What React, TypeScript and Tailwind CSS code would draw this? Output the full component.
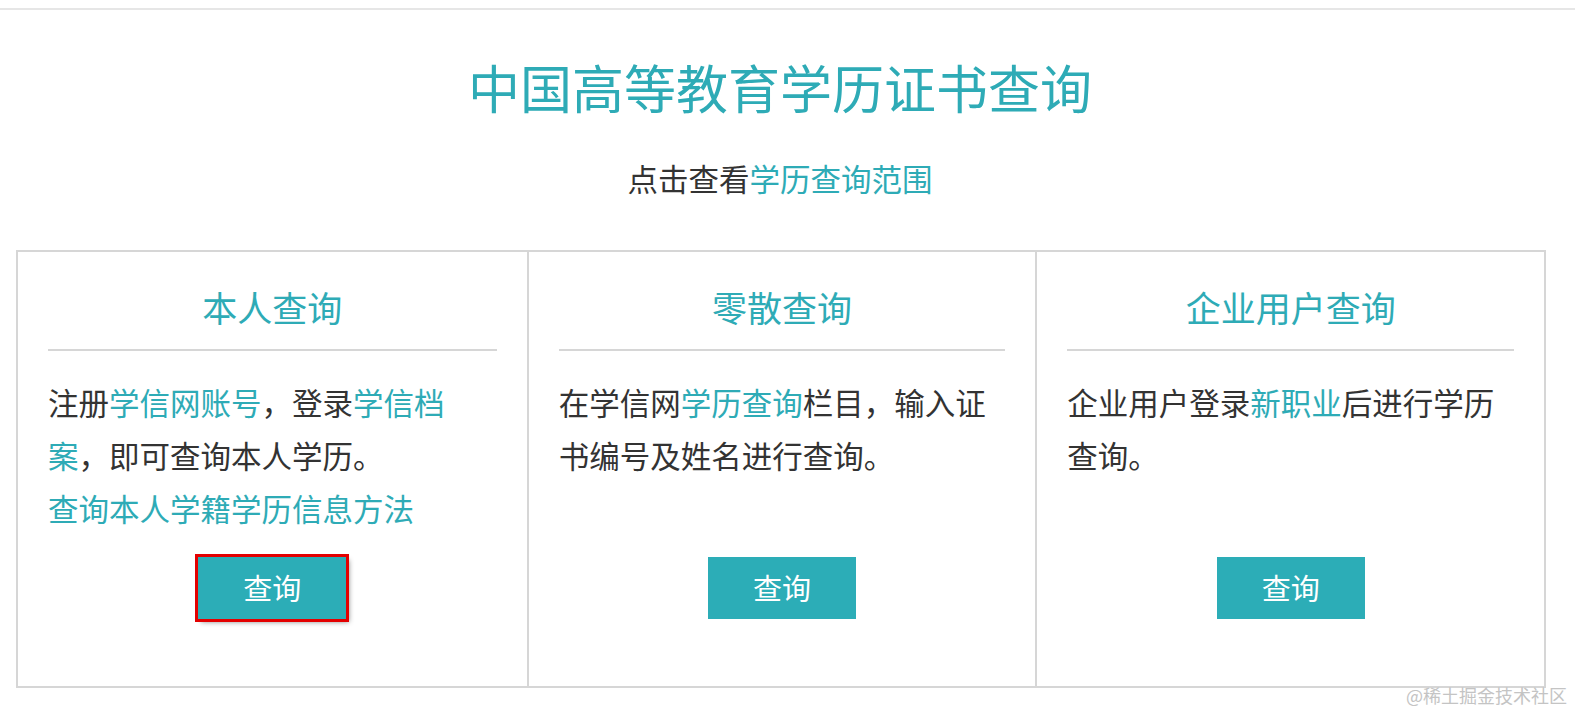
import React from "react";

const teal = "text-[#2eabb6]";

function Card({
  title,
  children,
  highlighted,
  first,
}: {
  title: string;
  children: React.ReactNode;
  highlighted?: boolean;
  first?: boolean;
}) {
  return (
    <div
      className={
        "flex flex-col px-[30px] pt-[30px] pb-[67px] " +
        (first ? "" : "border-l-2 border-[#d6d6d6]")
      }
    >
      <div className={"text-center text-[35px] leading-[50px] " + teal}>{title}</div>
      <div className="mt-[17px] h-[2px] bg-[#d6d6d6]" />
      <div className="mt-[25px] text-[30.5px] leading-[53px] text-[#333333]">{children}</div>
      <div className="mt-auto flex justify-center pt-[20px]">
        <button
          className={
            "flex h-[62px] w-[148px] items-center justify-center bg-[#2cadb7] text-[29px] text-white " +
            (highlighted
              ? "outline-[3px] outline-solid outline-[#e40000] shadow-[3px_3px_5px_rgba(0,0,0,0.45)]"
              : "")
          }
        >
          查询
        </button>
      </div>
    </div>
  );
}

export default function App() {
  return (
    <div
      className="relative h-[712px] w-full overflow-hidden bg-white"
      style={{ fontFamily: '"Noto Sans CJK SC", "Noto Sans", sans-serif' }}
    >
      <div className="h-[8px]" />
      <div className="border-t-2 border-[#e6e6e6]" />
      <div className="w-[1560px]">
        <h1 className={"mt-[47px] text-center text-[52px] leading-[60px] font-normal " + teal}>
          中国高等教育学历证书查询
        </h1>
        <div className="mt-[41px] text-center text-[30.5px] leading-[40px] text-[#333333]">
          点击查看<span className={teal}>学历查询范围</span>
        </div>
        <div className="ml-[16px] mt-[52px] grid h-[438px] w-[1530px] grid-cols-3 border-2 border-[#d6d6d6]">
          <Card title="本人查询" highlighted first>
            <div>
              注册<span className={teal}>学信网账号</span>，登录<span className={teal}>学信档案</span>，即可查询本人学历。
            </div>
            <div className={teal}>查询本人学籍学历信息方法</div>
          </Card>
          <Card title="零散查询">
            在学信网<span className={teal}>学历查询</span>栏目，输入证书编号及姓名进行查询。
          </Card>
          <Card title="企业用户查询">
            企业用户登录<span className={teal}>新职业</span>后进行学历查询。
          </Card>
        </div>
      </div>
      <div className="absolute right-[8px] top-[683px] text-[18px] leading-[24px] text-[#c4c4c4]">
        @稀土掘金技术社区
      </div>
    </div>
  );
}
